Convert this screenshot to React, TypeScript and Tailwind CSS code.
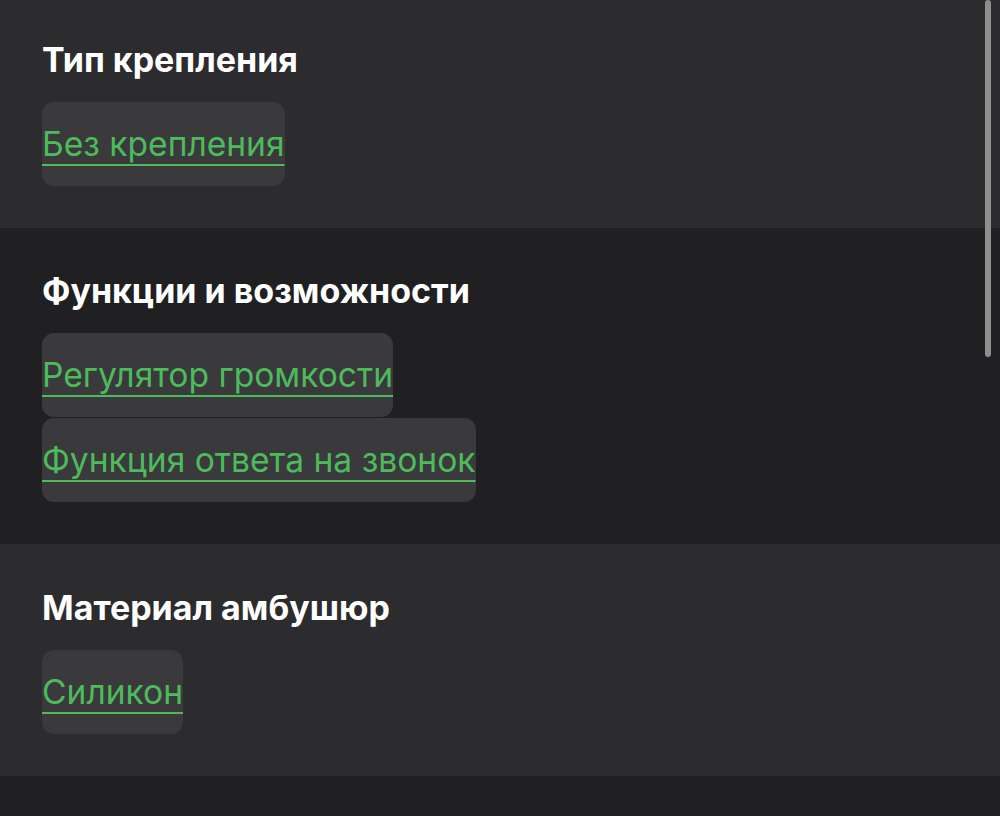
import React from 'react';

type Section = { title: string; items: string[]; tone: 'light' | 'dark'; pt: string };

const sections: Section[] = [
  { title: 'Тип крепления', items: ['Без крепления'], tone: 'light', pt: 'pt-[40px]' },
  { title: 'Функции и возможности', items: ['Регулятор громкости', 'Функция ответа на звонок'], tone: 'dark', pt: 'pt-[43px]' },
  { title: 'Материал амбушюр', items: ['Силикон'], tone: 'light', pt: 'pt-[44px]' },
];

const font = { fontFamily: 'Inter, "Noto Sans", sans-serif' };

export default function App() {
  return (
    <div className="relative w-[1000px] h-[816px] overflow-hidden bg-[#201f21]" style={font}>
      {sections.map((s) => (
        <div
          key={s.title}
          className={`px-[42px] pb-[42px] ${s.pt} ${s.tone === 'light' ? 'bg-[#2c2b2d]' : 'bg-[#201f21]'}`}
        >
          <h3 className="text-[34px] leading-[40px] font-bold text-white mb-[22px]">{s.title}</h3>
          <div className="flex flex-col items-start gap-px">
            {s.items.map((item) => (
              <a
                key={item}
                href="#"
                className="inline-flex items-center h-[84px] rounded-xl bg-[#3a393c] text-[33.6px] leading-[40px] text-[#4dbb5b] underline decoration-2 underline-offset-[8px]"
              >
                {item}
              </a>
            ))}
          </div>
        </div>
      ))}

      {/* полоса прокрутки */}
      <div className="absolute right-[9px] top-0 w-[6px] h-[357px] rounded-full bg-[#8e8e8e]" />
    </div>
  );
}
